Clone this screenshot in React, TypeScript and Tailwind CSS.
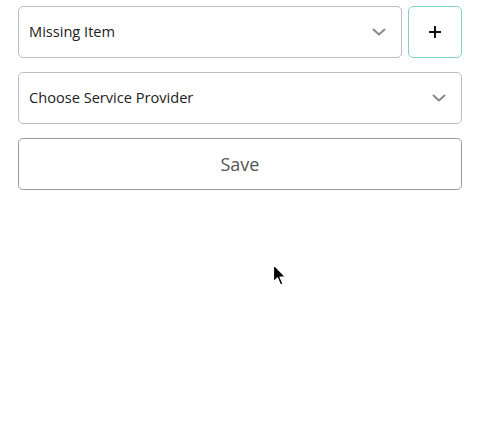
import React from "react";

function Chevron() {
  return (
    <svg width="14" height="8" viewBox="0 0 14 8" fill="none" className="shrink-0">
      <path d="M1.5 1.5 L7 6.5 L12.5 1.5" stroke="#8a8a8a" strokeWidth="2" strokeLinecap="round" strokeLinejoin="round" />
    </svg>
  );
}

function Select({ label, grow }: { label: string; grow?: boolean }) {
  return (
    <div
      className={
        grow
          ? "flex h-[52px] flex-1 items-center justify-between rounded-[5px] border border-[#bdbdbd] bg-white pl-[10px] pr-[15px]"
          : "flex h-[52px] shrink-0 items-center justify-between rounded-[5px] border border-[#bdbdbd] bg-white pl-[10px] pr-[15px]"
      }
    >
      <span className="text-[14.6px] text-[#222]">{label}</span>
      <Chevron />
    </div>
  );
}

export default function App() {
  return (
    <div
      className="relative h-[444px] w-[480px] bg-white"
      style={{ fontFamily: '"Open Sans", "Noto Sans", sans-serif' }}
    >
      <div className="flex flex-col gap-[14px] px-[18px] pt-[6px]">
        <div className="flex gap-[6px]">
          <Select label="Missing Item" grow />
          <button className="flex h-[52px] w-[54px] items-center justify-center rounded-[5px] border border-[#7fd4cf] bg-white">
            <svg width="14" height="14" viewBox="0 0 14 14">
              <path d="M7 1 V13 M1 7 H13" stroke="#111" strokeWidth="2" />
            </svg>
          </button>
        </div>
        <Select label="Choose Service Provider" />
        <button className="flex h-[52px] items-center justify-center rounded-[5px] border border-[#9a9a9a] bg-white text-[18px] text-[#555]">
          Save
        </button>
      </div>
      <svg className="absolute left-[272px] top-[263px]" width="16" height="24" viewBox="0 0 16 24">
        <path d="M1.5 1.5 V19 L5.5 15 L8.5 22 L11 21 L8 14 L13.5 14 Z" fill="#000" stroke="#fff" strokeWidth="1.2" strokeLinejoin="round" />
      </svg>
    </div>
  );
}
